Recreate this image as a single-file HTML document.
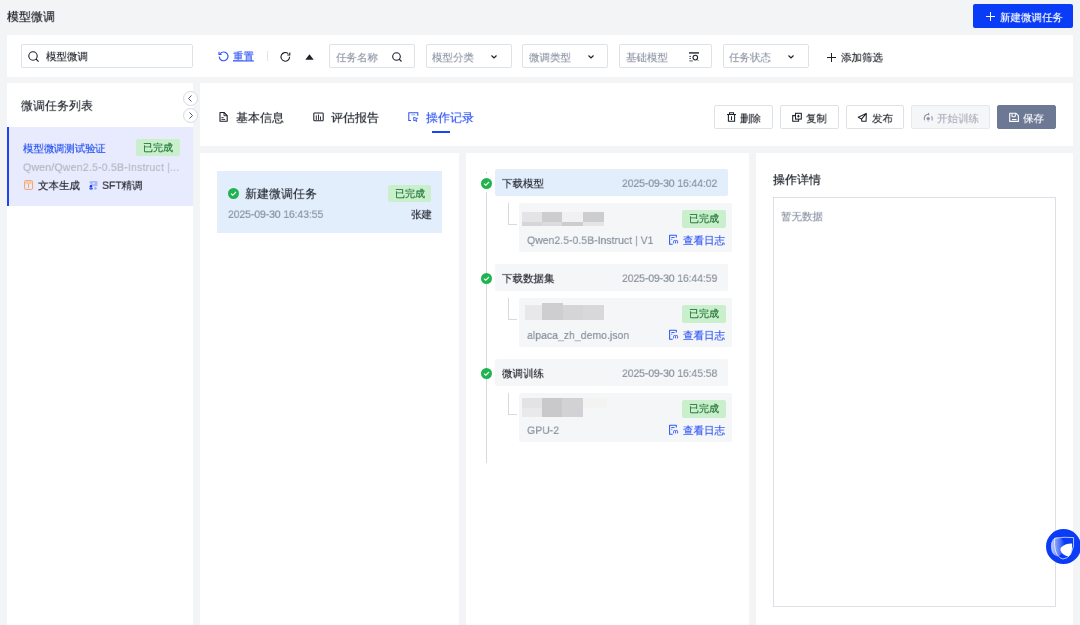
<!DOCTYPE html>
<html><head><meta charset="utf-8">
<style>
*{margin:0;padding:0;box-sizing:border-box}
html,body{width:1080px;height:625px;overflow:hidden;background:#f3f4f6;font-family:"Liberation Sans",sans-serif;color:#1d2129}
.a{position:absolute}
.t{position:absolute;white-space:nowrap;line-height:1;transform:scale(.75);transform-origin:0 0;will-change:transform;-webkit-text-stroke:0.2px currentColor}
.w{position:absolute;background:#fff}
.inp{position:absolute;height:24px;border:1px solid #dde1e8;border-radius:2px;background:#fff}
.ph{color:#8f96a6}
.badge{position:absolute;background:#c9efcc;color:#1b6f30;border-radius:2px;font-size:10px;line-height:17px;text-align:center;will-change:transform;-webkit-text-stroke:0.15px currentColor}
.btn{position:absolute;top:105px;height:24px;border:1px solid #dde1e8;border-radius:2px;background:#fff;font-size:10.5px;color:#1d2129}
.gray{color:#86909c}
svg{position:absolute;overflow:visible}
</style></head><body>

<!-- header -->
<div class="t" style="left:7px;top:11px;font-size:16px;-webkit-text-stroke:0.3px currentColor;color:#1d2129">模型微调</div>
<div class="a" style="left:973px;top:4px;width:100px;height:24px;background:#0a3cf8;border-radius:2px"></div>
<svg style="left:986px;top:12px" width="9" height="9"><path d="M4.5 0V9M0 4.5H9" stroke="#fff" stroke-width="1"/></svg>
<div class="t" style="left:1000px;top:12px;font-size:14px;color:#fff">新建微调任务</div>

<!-- filter bar -->
<div class="w" style="left:7px;top:35px;width:1066px;height:42px"></div>
<div class="inp" style="left:21px;top:44px;width:172px"></div>
<svg style="left:28px;top:51px" width="11" height="11"><circle cx="5" cy="5" r="4.2" fill="none" stroke="#1d2129" stroke-width="1.1"/><path d="M8 8L10.6 10.6" stroke="#1d2129" stroke-width="1.1"/></svg>
<div class="t" style="left:46px;top:51px;font-size:14px;color:#1d2129">模型微调</div>

<svg style="left:218px;top:51px" width="11" height="10"><path d="M2.2 2.6A4.4 4.4 0 1 1 1.2 5.6" fill="none" stroke="#2f55f5" stroke-width="1.1"/><path d="M1 0.8V3.4H3.6" fill="none" stroke="#2f55f5" stroke-width="1.1"/></svg>
<div class="t" style="left:233px;top:51px;font-size:14px;color:#2f55f5;text-decoration:underline">重置</div>
<div class="a" style="left:267px;top:51px;width:1px;height:10px;background:#dfe3ea"></div>
<svg style="left:280px;top:52px" width="11" height="10"><path d="M9.6 4.8A4.3 4.3 0 1 1 8.2 1.7" fill="none" stroke="#1d2129" stroke-width="1.1"/><path d="M9.8 0.5V3H7.3" fill="none" stroke="#1d2129" stroke-width="1.1"/></svg>
<svg style="left:305px;top:54px" width="9" height="6"><path d="M4.5 0.3L8.7 5.8H0.3Z" fill="#1d2129"/></svg>

<div class="inp" style="left:329px;top:44px;width:86px"></div>
<div class="t ph" style="left:336px;top:52px;font-size:14px">任务名称</div>
<svg style="left:392px;top:52px" width="10" height="10"><circle cx="4.5" cy="4.5" r="3.8" fill="none" stroke="#1d2129" stroke-width="1.1"/><path d="M7.2 7.2L9.5 9.5" stroke="#1d2129" stroke-width="1.1"/></svg>

<div class="inp" style="left:425.5px;top:44px;width:86px"></div>
<div class="t ph" style="left:432px;top:52px;font-size:14px">模型分类</div>
<svg style="left:490.5px;top:55px" width="6" height="4"><path d="M0.5 0.5L3 3L5.5 0.5" fill="none" stroke="#1d2129" stroke-width="1.2"/></svg>

<div class="inp" style="left:522px;top:44px;width:86px"></div>
<div class="t ph" style="left:528.5px;top:52px;font-size:14px">微调类型</div>
<svg style="left:587.5px;top:55px" width="6" height="4"><path d="M0.5 0.5L3 3L5.5 0.5" fill="none" stroke="#1d2129" stroke-width="1.2"/></svg>

<div class="inp" style="left:618.5px;top:44px;width:93px"></div>
<div class="t ph" style="left:625.5px;top:52px;font-size:14px">基础模型</div>
<svg style="left:685px;top:48px" width="18" height="18"><path d="M4 4.9H14" stroke="#3b4252" stroke-width="1.6"/><path d="M4.3 8.4H6M4.3 10.4H6M4.3 12.9H7.8" stroke="#3b4252" stroke-width="0.9"/><circle cx="10.3" cy="9.6" r="2.3" fill="none" stroke="#1d2129" stroke-width="1.05"/><path d="M11.9 11.3L13.2 12.6" stroke="#1d2129" stroke-width="1"/></svg>

<div class="inp" style="left:722.5px;top:44px;width:86px"></div>
<div class="t ph" style="left:729px;top:52px;font-size:14px">任务状态</div>
<svg style="left:787.5px;top:55px" width="6" height="4"><path d="M0.5 0.5L3 3L5.5 0.5" fill="none" stroke="#1d2129" stroke-width="1.2"/></svg>

<svg style="left:827px;top:52.5px" width="9" height="9"><path d="M4.5 0V9M0 4.5H9" stroke="#1d2129" stroke-width="1"/></svg>
<div class="t" style="left:841px;top:52px;font-size:14px;color:#1d2129">添加筛选</div>

<!-- left panel -->
<div class="w" style="left:7px;top:83px;width:186px;height:542px"></div>
<div class="t" style="left:21px;top:100px;font-size:16px;color:#1d2129">微调任务列表</div>
<div class="a" style="left:7px;top:127px;width:186px;height:79px;background:#e8eafd"></div>
<div class="a" style="left:7px;top:127px;width:2px;height:79px;background:#1b44f5"></div>
<div class="t" style="left:23px;top:143px;font-size:14px;color:#1f4ff0;letter-spacing:-0.25px">模型微调测试验证</div>
<div class="badge" style="left:136px;top:139px;width:43.5px;height:17px">已完成</div>
<div class="t" style="left:23px;top:162px;font-size:14px;color:#b4b7bf;letter-spacing:0.29px">Qwen/Qwen2.5-0.5B-Instruct |...</div>
<svg style="left:20px;top:176px" width="16" height="17"><rect x="4.6" y="4.6" width="8" height="8.8" rx="1" fill="none" stroke="#f5a26a" stroke-width="1"/><path d="M5 5.2H12.2V7.3L9 8.6V11.8H8V8.6L5 7.3Z" fill="#f9c7a4"/><path d="M8.5 8.2V11.8" stroke="#f5a26a" stroke-width="1"/></svg>
<div class="t" style="left:38px;top:180px;font-size:14px;color:#1d2129">文本生成</div>
<svg style="left:85px;top:176px" width="16" height="17"><path d="M4.5 6.2Q4.5 5 5.8 5H11.2Q12.5 5 12.5 6.2V9.2Q12.5 10.3 11.2 10.3H6.8Z" fill="#a8b8fb"/><circle cx="8.6" cy="7.5" r="1" fill="#e3e8fd"/><circle cx="5.9" cy="10.4" r="1.3" fill="#0a3cf8"/><ellipse cx="6.1" cy="12.6" rx="1.9" ry="1.2" fill="#3d63f6"/><circle cx="10.4" cy="12.4" r="1.3" fill="#9fb1fa"/></svg>
<div class="t" style="left:102px;top:180px;font-size:14px;color:#1d2129">SFT精调</div>

<div class="a" style="left:182.5px;top:90.5px;width:15px;height:15px;border:1px solid #d5d9e0;border-radius:50%;background:#fff"></div>
<svg style="left:187px;top:94.5px" width="6" height="7"><path d="M4.5 0.5L1.5 3.5L4.5 6.5" fill="none" stroke="#4e5969" stroke-width="1"/></svg>
<div class="a" style="left:182.5px;top:107.5px;width:15px;height:15px;border:1px solid #d5d9e0;border-radius:50%;background:#fff"></div>
<svg style="left:188px;top:111.5px" width="6" height="7"><path d="M1.5 0.5L4.5 3.5L1.5 6.5" fill="none" stroke="#4e5969" stroke-width="1"/></svg>

<!-- tabs panel -->
<div class="w" style="left:200px;top:83px;width:873px;height:63px"></div>
<svg style="left:216px;top:108px" width="16" height="17"><path d="M4 4.5H8L11.2 7.7V13.3H4Z" fill="none" stroke="#1d2129" stroke-width="1.1" stroke-linejoin="round"/><path d="M8 4.5V7.7H11.2" fill="none" stroke="#1d2129" stroke-width="0.9"/><path d="M5.4 9.6H7.6M5.4 11.4H9.2" stroke="#1d2129" stroke-width="0.9"/></svg>
<div class="t" style="left:236px;top:111.5px;font-size:16px;color:#1d2129">基本信息</div>
<svg style="left:310px;top:108px" width="16" height="17"><rect x="3.8" y="4.9" width="9.4" height="7.9" rx="0.8" fill="none" stroke="#1d2129" stroke-width="1.05"/><path d="M6.3 7.4V11.9M8.5 6.6V11.9M10.5 8.4V11.9" stroke="#1d2129" stroke-width="0.9"/></svg>
<div class="t" style="left:331px;top:111.5px;font-size:16px;color:#1d2129">评估报告</div>
<svg style="left:405px;top:108px" width="16" height="17"><path d="M6 12.4H3.8V4.8H12.8V7.7" fill="none" stroke="#2f55f5" stroke-width="1.05"/><path d="M6.3 6.8H10.2" stroke="#8aa0f8" stroke-width="1"/><path d="M8.6 9.3L12.5 10.6L10.8 11.3L12 13L11.1 13.6L10 12L8.9 13Z" fill="none" stroke="#2f55f5" stroke-width="0.9" stroke-linejoin="round"/></svg>
<div class="t" style="left:426px;top:111.5px;font-size:16px;color:#2f55f5">操作记录</div>
<div class="a" style="left:432px;top:131px;width:17.5px;height:2px;background:#1b44f5"></div>

<div class="btn" style="left:714px;width:59px"></div>
<svg style="left:724px;top:109px" width="16" height="17"><path d="M3 5.4H12M5.5 5.4V3.8H9.5V5.4M4.4 5.4V12.2H10.6V5.4M7.5 7.2V11" fill="none" stroke="#1d2129" stroke-width="1.05"/></svg>
<div class="t" style="left:740px;top:113px;font-size:14px">删除</div>
<div class="btn" style="left:780px;width:58.5px"></div>
<svg style="left:789px;top:109px" width="16" height="17"><path d="M6.2 6.6H3.7V12.3H9.6V10" fill="none" stroke="#1d2129" stroke-width="1.05"/><rect x="6.5" y="4.3" width="5.8" height="5.8" fill="none" stroke="#1d2129" stroke-width="1.05"/><path d="M9.4 5.9V8.5M8.1 7.2H10.7" stroke="#1d2129" stroke-width="1"/></svg>
<div class="t" style="left:806px;top:113px;font-size:14px">复制</div>
<div class="btn" style="left:845.5px;width:58.5px"></div>
<svg style="left:854px;top:109px" width="16" height="17"><path d="M12.3 4.4L4.3 8.2L7.5 10.1L7.9 12.3L12.1 12.2Z M12.3 4.4L7.5 10.1" fill="none" stroke="#1d2129" stroke-width="1.05" stroke-linejoin="round"/></svg>
<div class="t" style="left:872px;top:113px;font-size:14px">发布</div>
<div class="btn" style="left:911px;width:79px;background:#f5f6f8;border-color:#e5e8ed"></div>
<svg style="left:920px;top:109px" width="16" height="17"><path d="M4.6 11.3A4.2 4.2 0 0 1 8.6 5.3M11.6 7.3A4.2 4.2 0 0 1 11.9 11.4" fill="none" stroke="#8a93a6" stroke-width="1.1"/><path d="M8 3.6L9.7 5.2L8 6.6Z" fill="#8a93a6"/><circle cx="8.2" cy="9.6" r="1.7" fill="#8a93a6"/><path d="M8.2 10.5V13" stroke="#b8bec9" stroke-width="0.9"/></svg>
<div class="t" style="left:937px;top:113px;font-size:14px;color:#a9aeb8">开始训练</div>
<div class="btn" style="left:997px;width:59px;background:#6c7894;border-color:#6c7894"></div>
<svg style="left:1006px;top:109px" width="16" height="17"><path d="M3.7 4.3H10L12.4 6.7V12.4H3.7Z" fill="none" stroke="#fff" stroke-width="1.1" stroke-linejoin="round"/><path d="M6 4.3V7.7H9.3V4.3" fill="none" stroke="#fff" stroke-width="1"/><path d="M6 10.5H10.5" stroke="#fff" stroke-width="1"/></svg>
<div class="t" style="left:1023px;top:113px;font-size:14px;color:#fff">保存</div>

<!-- panel 1 -->
<div class="w" style="left:200px;top:153px;width:259px;height:472px"></div>
<div class="a" style="left:217px;top:171px;width:224.5px;height:62px;background:#e3eefd"></div>
<svg style="left:228px;top:188px" width="11" height="11"><circle cx="5.5" cy="5.5" r="5.5" fill="#1fb44f"/><path d="M3 5.6L4.8 7.2L8 4" fill="none" stroke="#fff" stroke-width="1.1"/></svg>
<div class="t" style="left:245px;top:188px;font-size:16px;color:#1d2129">新建微调任务</div>
<div class="badge" style="left:388px;top:185px;width:43px;height:17px">已完成</div>
<div class="t gray" style="left:228px;top:209px;font-size:14px;letter-spacing:-0.17px">2025-09-30 16:43:55</div>
<div class="t" style="left:410.5px;top:209px;font-size:14px;color:#1d2129">张建</div>

<!-- panel 2 -->
<div class="w" style="left:466px;top:153px;width:283px;height:472px"></div>
<div class="a" style="left:486px;top:172px;width:1px;height:1.5px;background:#d5d9e0"></div>
<div class="a" style="left:486px;top:192px;width:1.2px;height:270.5px;background:#d5d9e0"></div>

<div class="a" style="left:495px;top:169px;width:233px;height:27px;background:#e3eefd;border-radius:2px"></div>
<svg style="left:481px;top:177.5px" width="11" height="11"><circle cx="5.5" cy="5.5" r="5.5" fill="#1fb44f"/><path d="M3 5.6L4.8 7.2L8 4" fill="none" stroke="#fff" stroke-width="1.1"/></svg>
<div class="t" style="left:502px;top:178px;font-size:14px;color:#1d2129">下载模型</div>
<div class="t gray" style="left:621.5px;top:178px;font-size:14px;letter-spacing:-0.17px">2025-09-30 16:44:02</div>
<div class="a" style="left:508px;top:203px;width:9px;height:22px;border-left:1px solid #d5d9e0;border-bottom:1px solid #d5d9e0"></div>
<div class="a" style="left:519px;top:203px;width:212.5px;height:48.5px;background:#f5f6f8;border-radius:2px"></div>
<div class="a" style="left:522px;top:212px;width:20px;height:9.6px;background:#e4e4e6"></div><div class="a" style="left:542px;top:212px;width:20px;height:9.6px;background:#cdcdd0"></div><div class="a" style="left:562px;top:212px;width:21.3px;height:9.6px;background:#f1f1f3"></div><div class="a" style="left:583.3px;top:212px;width:20.7px;height:9.6px;background:#cdcdd0"></div><div class="a" style="left:522px;top:221.6px;width:20px;height:4.8px;background:#d6d6d9"></div><div class="a" style="left:542px;top:221.6px;width:20px;height:4.8px;background:#dcdcdf"></div><div class="a" style="left:562px;top:221.6px;width:21.3px;height:4.8px;background:#cdcdd0"></div><div class="a" style="left:583.3px;top:221.6px;width:20.7px;height:4.8px;background:#e5e5e7"></div>
<div class="badge" style="left:681.5px;top:210px;width:43.5px;height:17.5px">已完成</div>
<div class="t gray" style="left:526.5px;top:235px;font-size:14px">Qwen2.5-0.5B-Instruct | V1</div>
<svg style="left:665px;top:232px" width="16" height="17"><path d="M7.7 12.2H4.6V3.3H11.3V5.6" fill="none" stroke="#2f55f5" stroke-width="1.05" stroke-linejoin="round"/><path d="M6.3 5.5H9.6M6.3 7.3H7.3" stroke="#2f55f5" stroke-width="0.9"/><path d="M8.6 11.4V9.3Q8.6 8.4 9.6 8.4Q10.6 8.4 10.6 9.3V11.4M10.6 9.3Q10.6 8.4 11.6 8.4Q12.6 8.4 12.6 9.3V11.4" fill="none" stroke="#2f55f5" stroke-width="0.9"/></svg>
<div class="t" style="left:683px;top:235px;font-size:14px;color:#2f55f5">查看日志</div>

<div class="a" style="left:495px;top:264px;width:233px;height:27px;background:#f5f6f8;border-radius:2px"></div>
<svg style="left:481px;top:272.5px" width="11" height="11"><circle cx="5.5" cy="5.5" r="5.5" fill="#1fb44f"/><path d="M3 5.6L4.8 7.2L8 4" fill="none" stroke="#fff" stroke-width="1.1"/></svg>
<div class="t" style="left:502px;top:273px;font-size:14px;color:#1d2129">下载数据集</div>
<div class="t gray" style="left:621.5px;top:273px;font-size:14px;letter-spacing:-0.17px">2025-09-30 16:44:59</div>
<div class="a" style="left:508px;top:298px;width:9px;height:22px;border-left:1px solid #d5d9e0;border-bottom:1px solid #d5d9e0"></div>
<div class="a" style="left:519px;top:298px;width:212.5px;height:48.5px;background:#f5f6f8;border-radius:2px"></div>
<div class="a" style="left:525.2px;top:304.6px;width:16.8px;height:15.2px;background:#e8e8ea"></div><div class="a" style="left:542px;top:303px;width:20.5px;height:16.8px;background:#ceced1"></div><div class="a" style="left:562.5px;top:304.6px;width:20.8px;height:15.2px;background:#d5d5d8"></div><div class="a" style="left:583.3px;top:304.6px;width:20.7px;height:15.2px;background:#d8d8db"></div>
<div class="badge" style="left:681.5px;top:305px;width:43.5px;height:17.5px">已完成</div>
<div class="t gray" style="left:526.5px;top:330px;font-size:14px">alpaca_zh_demo.json</div>
<svg style="left:665px;top:327px" width="16" height="17"><path d="M7.7 12.2H4.6V3.3H11.3V5.6" fill="none" stroke="#2f55f5" stroke-width="1.05" stroke-linejoin="round"/><path d="M6.3 5.5H9.6M6.3 7.3H7.3" stroke="#2f55f5" stroke-width="0.9"/><path d="M8.6 11.4V9.3Q8.6 8.4 9.6 8.4Q10.6 8.4 10.6 9.3V11.4M10.6 9.3Q10.6 8.4 11.6 8.4Q12.6 8.4 12.6 9.3V11.4" fill="none" stroke="#2f55f5" stroke-width="0.9"/></svg>
<div class="t" style="left:683px;top:330px;font-size:14px;color:#2f55f5">查看日志</div>

<div class="a" style="left:495px;top:359px;width:233px;height:27px;background:#f5f6f8;border-radius:2px"></div>
<svg style="left:481px;top:367.5px" width="11" height="11"><circle cx="5.5" cy="5.5" r="5.5" fill="#1fb44f"/><path d="M3 5.6L4.8 7.2L8 4" fill="none" stroke="#fff" stroke-width="1.1"/></svg>
<div class="t" style="left:502px;top:368px;font-size:14px;color:#1d2129">微调训练</div>
<div class="t gray" style="left:621.5px;top:368px;font-size:14px;letter-spacing:-0.17px">2025-09-30 16:45:58</div>
<div class="a" style="left:508px;top:393px;width:9px;height:22px;border-left:1px solid #d5d9e0;border-bottom:1px solid #d5d9e0"></div>
<div class="a" style="left:519px;top:393px;width:212.5px;height:48.5px;background:#f5f6f8;border-radius:2px"></div>
<div class="a" style="left:521.8px;top:398px;width:20.2px;height:9.6px;background:#e3e3e6"></div><div class="a" style="left:542px;top:398px;width:20px;height:19.2px;background:#c9c9cc"></div><div class="a" style="left:562px;top:398px;width:21.2px;height:19.2px;background:#d2d2d5"></div><div class="a" style="left:583.2px;top:398px;width:24px;height:9.6px;background:#f3f3f2"></div><div class="a" style="left:521.8px;top:407.6px;width:20.2px;height:9.6px;background:#e9e9eb"></div>
<div class="badge" style="left:681.5px;top:400px;width:43.5px;height:17.5px">已完成</div>
<div class="t gray" style="left:526.5px;top:425px;font-size:14px">GPU-2</div>
<svg style="left:665px;top:422px" width="16" height="17"><path d="M7.7 12.2H4.6V3.3H11.3V5.6" fill="none" stroke="#2f55f5" stroke-width="1.05" stroke-linejoin="round"/><path d="M6.3 5.5H9.6M6.3 7.3H7.3" stroke="#2f55f5" stroke-width="0.9"/><path d="M8.6 11.4V9.3Q8.6 8.4 9.6 8.4Q10.6 8.4 10.6 9.3V11.4M10.6 9.3Q10.6 8.4 11.6 8.4Q12.6 8.4 12.6 9.3V11.4" fill="none" stroke="#2f55f5" stroke-width="0.9"/></svg>
<div class="t" style="left:683px;top:425px;font-size:14px;color:#2f55f5">查看日志</div>

<!-- panel 3 -->
<div class="w" style="left:756px;top:153px;width:317px;height:472px"></div>
<div class="t" style="left:773px;top:174px;font-size:16px;-webkit-text-stroke:0.3px currentColor;color:#1d2129">操作详情</div>
<div class="a" style="left:773px;top:197px;width:283px;height:409.5px;border:1px solid #dcdfe5"></div>
<div class="t" style="left:781px;top:211px;font-size:14px;color:#8f96a6">暂无数据</div>

<!-- floating -->
<div class="a" style="left:1045.5px;top:529px;width:35px;height:35px;border-radius:50%;background:#0a3cf8"></div>
<svg style="left:1040px;top:525px" width="40" height="43"><defs><linearGradient id="g1" x1="0" y1="0" x2="1" y2="0"><stop offset="0" stop-color="#fff" stop-opacity="0.75"/><stop offset="0.55" stop-color="#fff" stop-opacity="0.35"/><stop offset="1" stop-color="#fff" stop-opacity="0"/></linearGradient></defs><path d="M17.5 12.2Q11 12.5 11 21.5Q11 30 17.5 31.5Q23 30 25 22Q24.5 13.5 17.5 12.2Z" fill="url(#g1)"/><path d="M14.6 13.3Q24 11.6 33.6 12.6Q35 22 30.5 29.5Q27 33.8 23 34Q17.5 32.5 15.5 26Q13.8 19.5 14.6 13.3Z" fill="none" stroke="#fff" stroke-width="0.75" opacity="0.9"/><path d="M20.5 23Q25 18.5 32 18.6Q33 27 28.8 31.5Q22.5 30.5 20.5 25.5Z" fill="#fff"/></svg>

</body></html>
